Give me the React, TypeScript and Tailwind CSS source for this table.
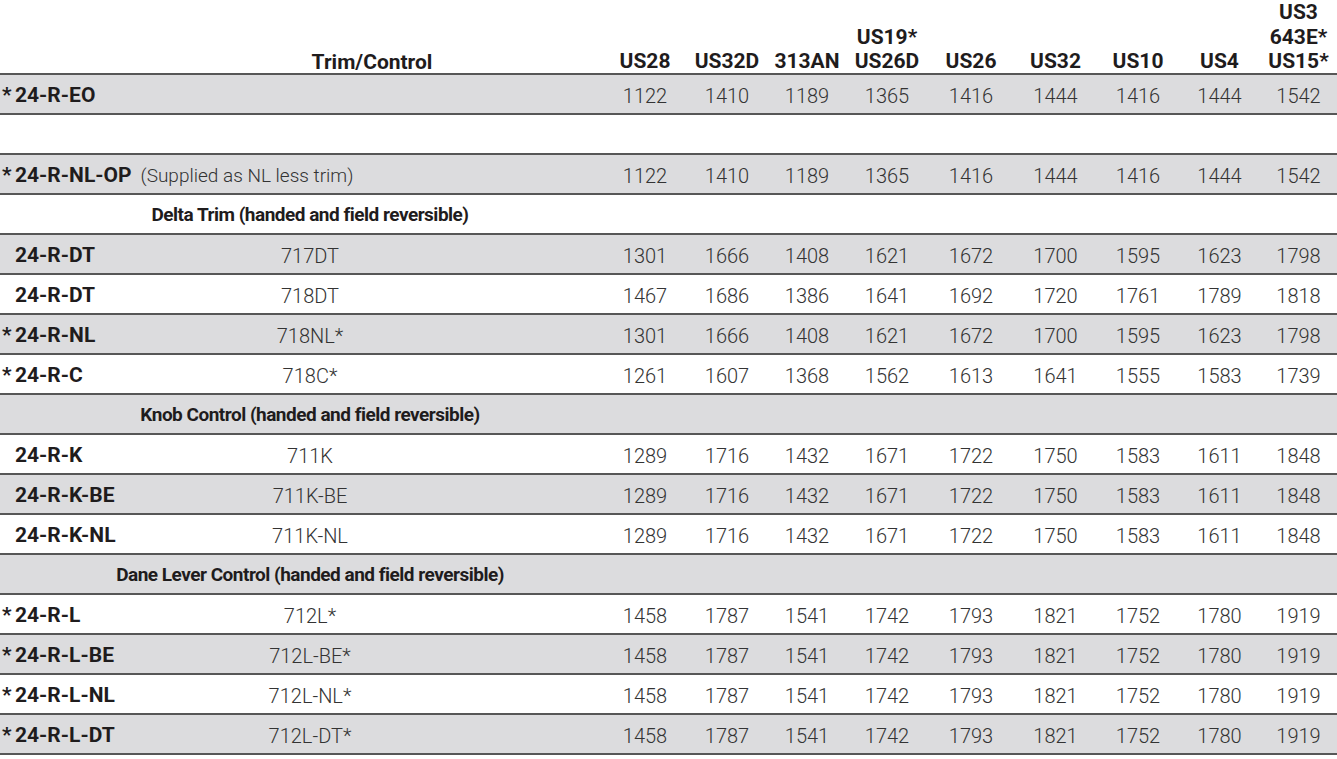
import React from 'react';

type Row =
  | { kind: 'item'; star?: boolean; model: string; trim?: string; note?: string; vals: number[] }
  | { kind: 'blank' }
  | { kind: 'section'; label: string };

const COLS = 'grid grid-cols-[140px_340px_124px_82px_82px_78px_82px_86px_83px_82px_81px_77px]';

const EO = [1122, 1410, 1189, 1365, 1416, 1444, 1416, 1444, 1542];
const DT = [1301, 1666, 1408, 1621, 1672, 1700, 1595, 1623, 1798];
const DT8 = [1467, 1686, 1386, 1641, 1692, 1720, 1761, 1789, 1818];
const C = [1261, 1607, 1368, 1562, 1613, 1641, 1555, 1583, 1739];
const K = [1289, 1716, 1432, 1671, 1722, 1750, 1583, 1611, 1848];
const L = [1458, 1787, 1541, 1742, 1793, 1821, 1752, 1780, 1919];

const ROWS: Row[] = [
  { kind: 'item', star: true, model: '24-R-EO', vals: EO },
  { kind: 'blank' },
  { kind: 'item', star: true, model: '24-R-NL-OP', note: '(Supplied as NL less trim)', vals: EO },
  { kind: 'section', label: 'Delta Trim (handed and field reversible)' },
  { kind: 'item', model: '24-R-DT', trim: '717DT', vals: DT },
  { kind: 'item', model: '24-R-DT', trim: '718DT', vals: DT8 },
  { kind: 'item', star: true, model: '24-R-NL', trim: '718NL*', vals: DT },
  { kind: 'item', star: true, model: '24-R-C', trim: '718C*', vals: C },
  { kind: 'section', label: 'Knob Control (handed and field reversible)' },
  { kind: 'item', model: '24-R-K', trim: '711K', vals: K },
  { kind: 'item', model: '24-R-K-BE', trim: '711K-BE', vals: K },
  { kind: 'item', model: '24-R-K-NL', trim: '711K-NL', vals: K },
  { kind: 'section', label: 'Dane Lever Control (handed and field reversible)' },
  { kind: 'item', star: true, model: '24-R-L', trim: '712L*', vals: L },
  { kind: 'item', star: true, model: '24-R-L-BE', trim: '712L-BE*', vals: L },
  { kind: 'item', star: true, model: '24-R-L-NL', trim: '712L-NL*', vals: L },
  { kind: 'item', star: true, model: '24-R-L-DT', trim: '712L-DT*', vals: L },
];

const FINISHES: string[][] = [
  ['US28'],
  ['US32D'],
  ['313AN'],
  ['US19*', 'US26D'],
  ['US26'],
  ['US32'],
  ['US10'],
  ['US4'],
  ['US3', '643E*', 'US15*'],
];

function Model({ star, model }: { star?: boolean; model: string }) {
  return (
    <span className="pl-[2px] text-[21px] font-bold text-[#1f1c1d]">
      <span className={star ? 'inline-block w-[13px]' : 'invisible inline-block w-[13px]'}>*</span>
      {model}
    </span>
  );
}

export default function App() {
  return (
    <div className="h-[759px] w-[1337px] overflow-hidden bg-white font-['Roboto',sans-serif] text-[20px] text-[#1f1c1d]">
      {/* header */}
      <div className={`${COLS} h-[75px] border-b-2 border-[#575757] pb-[3px]`}>
        <div />
        <div className="col-span-2 self-end text-center text-[21px] leading-[24px] font-bold">Trim/Control</div>
        {FINISHES.map((f) => (
          <div key={f.join()} className="flex flex-col justify-end text-center text-[21px] leading-[24.5px] font-bold">
            {f.map((line) => (
              <span key={line}>{line}</span>
            ))}
          </div>
        ))}
      </div>

      {ROWS.map((r, i) => {
        const bg = i % 2 === 0 ? 'bg-[#dcdcde]' : 'bg-white';
        if (r.kind === 'blank') {
          return <div key={i} className={`h-[40px] border-b-2 border-[#575757] ${bg}`} />;
        }
        if (r.kind === 'section') {
          return (
            <div key={i} className={`${COLS} h-[40px] items-center border-b-2 border-[#575757] pt-[3px] ${bg}`}>
              <div />
              <div className="flex justify-center whitespace-nowrap text-[19px] font-bold tracking-[-0.5px]">
                <span>{r.label}</span>
              </div>
            </div>
          );
        }
        return (
          <div key={i} className={`${COLS} h-[40px] items-center border-b-2 border-[#575757] pt-[3px] ${bg}`}>
            {r.note ? (
              <div className="col-span-3 whitespace-nowrap">
                <Model star={r.star} model={r.model} />
                <span className="ml-[9px] text-[19px] font-light text-[#333]">{r.note}</span>
              </div>
            ) : (
              <>
                <div className="whitespace-nowrap">
                  <Model star={r.star} model={r.model} />
                </div>
                <div className="text-center font-light text-[#333]">{r.trim}</div>
                <div />
              </>
            )}
            {r.vals.map((v, j) => (
              <div key={j} className="text-center font-light text-[#333]">
                {v}
              </div>
            ))}
          </div>
        );
      })}
    </div>
  );
}
